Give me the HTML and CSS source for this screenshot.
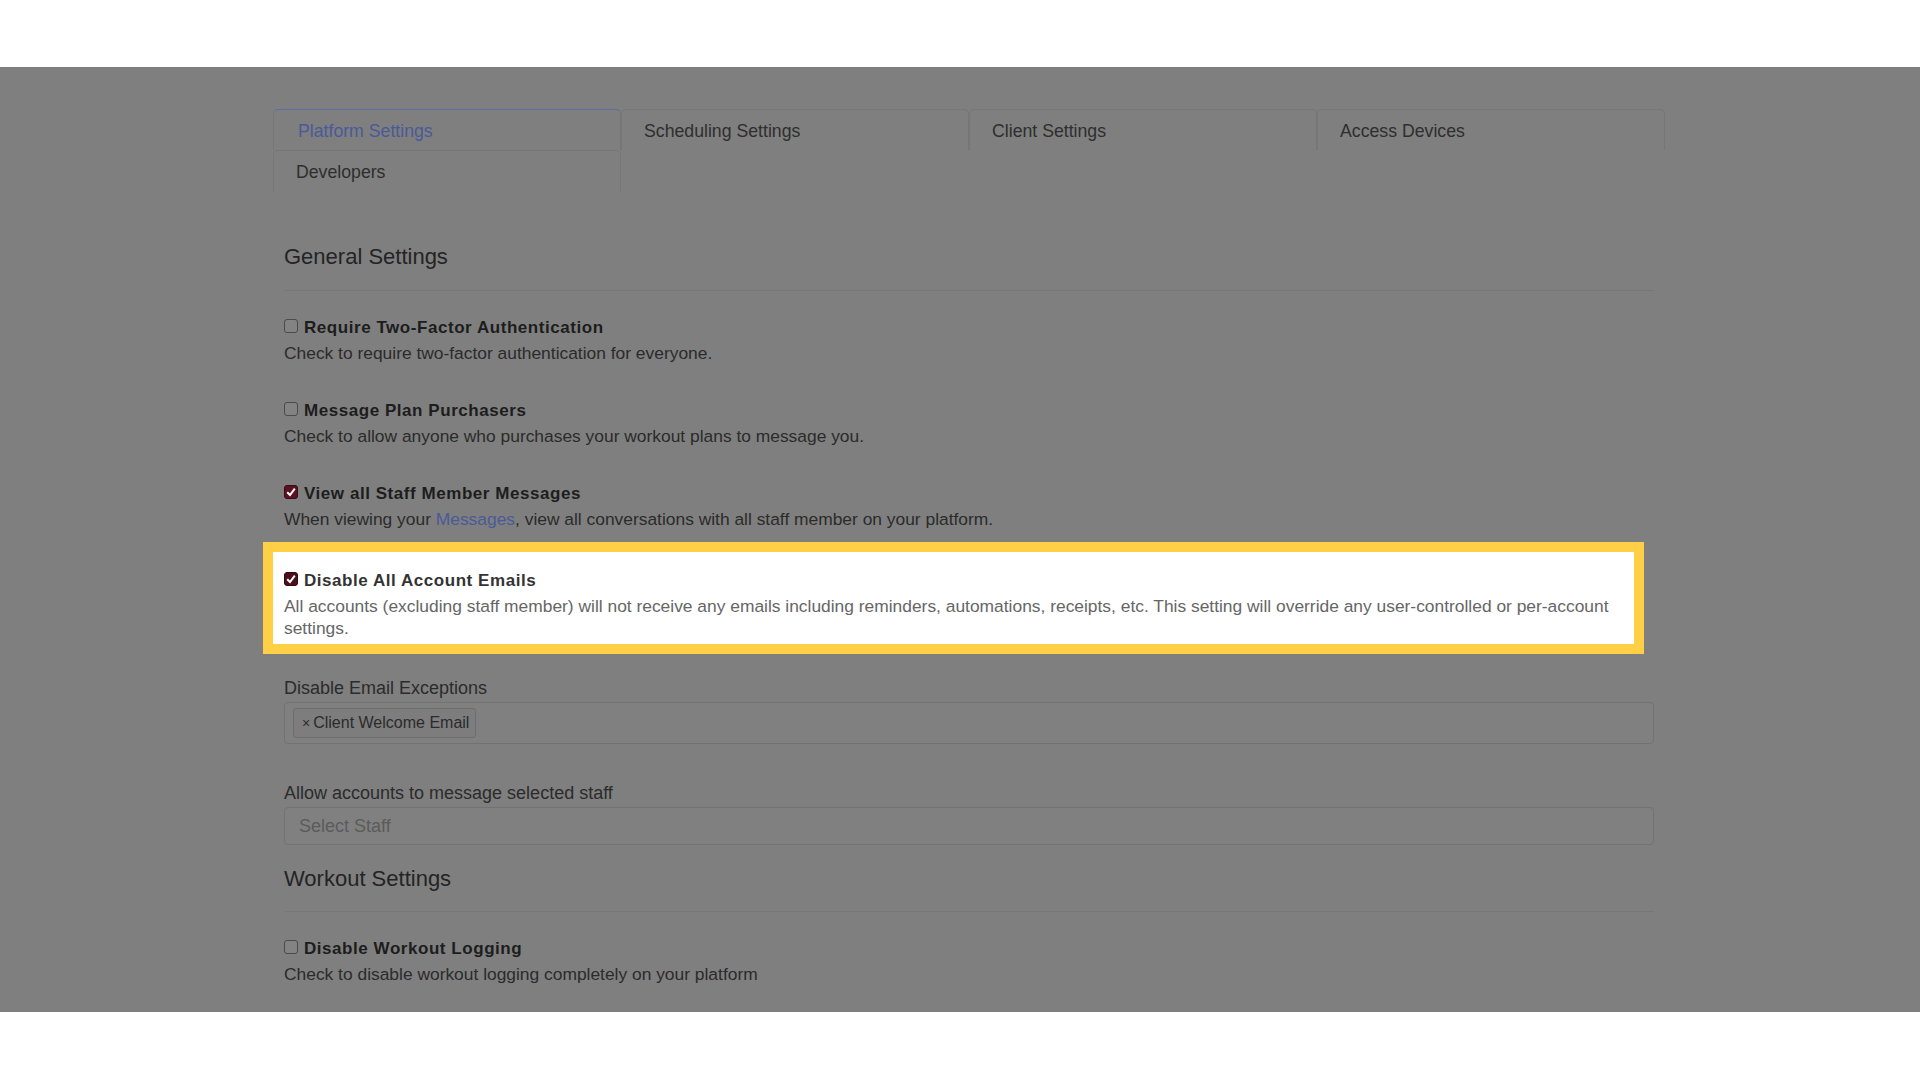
FILE: index.html
```html
<!DOCTYPE html>
<html lang="en">
<head>
    <meta charset="UTF-8">
    <meta name="viewport" content="width=device-width, initial-scale=1.0">
    <title>Platform Settings</title>
    <link rel="stylesheet" href="styles.css">
</head>
<body>
    <div class="band"></div>

    <main class="screen">
        <div class="panel">
            <nav class="tabs">
                <div class="tab active">Platform Settings</div>
                <div class="tab">Scheduling Settings</div>
                <div class="tab">Client Settings</div>
                <div class="tab">Access Devices</div>
                <div class="tab">Developers</div>
            </nav>

            <div class="content">
                <h2 class="section-title first">General Settings</h2>
                <hr class="divider">

                <div class="setting first">
                    <div class="setting-title"><span class="check"></span>Require Two-Factor Authentication</div>
                    <div class="setting-desc">Check to require two-factor authentication for everyone.</div>
                </div>

                <div class="setting">
                    <div class="setting-title"><span class="check"></span>Message Plan Purchasers</div>
                    <div class="setting-desc">Check to allow anyone who purchases your workout plans to message you.</div>
                </div>

                <div class="setting">
                    <div class="setting-title">
                        <span class="check checked">
                            <svg viewBox="0 0 14 14" width="14" height="14"><path d="M3.2 7.2 L6 10 L10.8 3.6" fill="none" stroke="#fff" stroke-width="2"/></svg>
                        </span>View all Staff Member Messages
                    </div>
                    <div class="setting-desc">When viewing your <a href="#" class="link">Messages</a>, view all conversations with all staff member on your platform.</div>
                </div>

                <div class="setting highlight">
                    <div class="setting-title">
                        <span class="check checked">
                            <svg viewBox="0 0 14 14" width="14" height="14"><path d="M3.2 7.2 L6 10 L10.8 3.6" fill="none" stroke="#fff" stroke-width="2"/></svg>
                        </span>Disable All Account Emails
                    </div>
                    <div class="setting-desc">All accounts (excluding staff member) will not receive any emails including reminders, automations, receipts, etc. This setting will override any user-controlled or per-account settings.</div>
                </div>

                <div class="field">
                    <label class="field-label">Disable Email Exceptions</label>
                    <div class="select tall">
                        <span class="tag"><span class="tag-x">×</span>Client Welcome Email</span>
                    </div>
                </div>

                <div class="field">
                    <label class="field-label">Allow accounts to message selected staff</label>
                    <div class="select">
                        <span class="placeholder">Select Staff</span>
                    </div>
                </div>

                <h2 class="section-title">Workout Settings</h2>
                <hr class="divider">

                <div class="setting first">
                    <div class="setting-title"><span class="check"></span>Disable Workout Logging</div>
                    <div class="setting-desc">Check to disable workout logging completely on your platform</div>
                </div>
            </div>
        </div>
    </main>

    <div class="band"></div>
</body>
</html>
```

FILE: styles.css
```css
body {
    margin: 0;
    background: #fff;
    font-family: "Liberation Sans", Arial, sans-serif;
    color: #2b2b2b;
}

.band {
    height: 67px;
    background: #fff;
}

.screen {
    height: 945px;
    box-sizing: border-box;
    padding: 42px 0 0 273px;
    background: #7f7f7f;
    overflow: hidden;
}

.panel {
    width: 1392px;
}

/* tabs */
.tabs {
    display: grid;
    grid-template-columns: repeat(4, 1fr);
    grid-template-rows: 41px 42px;
}

.tab {
    display: flex;
    align-items: center;
    padding: 2px 0 0 22px;
    border: 1px solid #767676;
    border-bottom: none;
    border-radius: 5px 5px 0 0;
    font-size: 17.7px;
    color: #2e2e2e;
}

.tab.active {
    padding-left: 24px;
    border-top: 1px solid #5d6ca3;
    color: #4a5a98;
}

/* content */
.content {
    padding: 0 11px;
}

.section-title {
    margin: 21px 0 0;
    font-size: 22px;
    font-weight: normal;
    line-height: 26px;
    color: #242424;
}

.section-title.first {
    margin-top: 52px;
}

.divider {
    margin: 20px 0 0;
    border: none;
    border-top: 1px solid #777;
}

.section-title + .divider {
    margin-top: 19px;
}

.section-title.first + .divider {
    margin-top: 20px;
}

.setting {
    margin-top: 35px;
}

.setting.first {
    margin-top: 25px;
}

.setting-title {
    display: flex;
    align-items: center;
    line-height: 24px;
    font-size: 17px;
    font-weight: bold;
    letter-spacing: 0.55px;
    color: #1d1d1d;
}

.setting-desc {
    margin-top: 2px;
    font-size: 17.4px;
    line-height: 22px;
    color: #2b2b2b;
}

.link {
    color: #4a5a98;
    text-decoration: none;
}

.check {
    display: inline-flex;
    flex: none;
    width: 14px;
    height: 14px;
    box-sizing: border-box;
    margin: -5px 6px 0 0;
    border: 1px solid #4a4a4a;
    border-radius: 3px;
    background: #838383;
}

.check.checked {
    border-color: #3a0a14;
    background: #5a1222;
}

.check svg {
    margin: -1px;
}

/* the yellow call-out */
.highlight {
    margin: 12px 10px 0 -21px;
    padding: 17px 11px 5px;
    border: 10px solid #ffd045;
    background: #fff;
}

.highlight .setting-title {
    color: #333;
}

.highlight .setting-desc {
    color: #666;
}

.highlight .check.checked {
    border-color: #2d0810;
    background: #4c0f1c;
}

/* fields */
.field {
    margin-top: 38px;
}

.highlight + .field {
    margin-top: 23px;
}

.field-label {
    display: block;
    font-size: 18px;
    line-height: 22px;
    color: #2b2b2b;
}

.select {
    display: flex;
    align-items: center;
    height: 38px;
    box-sizing: border-box;
    margin-top: 3px;
    padding: 0 14px;
    border: 1px solid #727272;
    border-radius: 4px;
    background: #808080;
}

.select.tall {
    height: 42px;
    padding: 0 8px;
}

.tag {
    display: inline-flex;
    align-items: center;
    height: 30px;
    box-sizing: border-box;
    padding: 0 6px 0 8px;
    border: 1px solid #6d6d6d;
    border-radius: 3px;
    background: #7d7d7d;
    font-size: 16px;
    color: #2b2b2b;
}

.tag-x {
    margin-right: 3px;
    font-size: 14px;
}

.placeholder {
    font-size: 18px;
    color: #5b5b5b;
}
```
